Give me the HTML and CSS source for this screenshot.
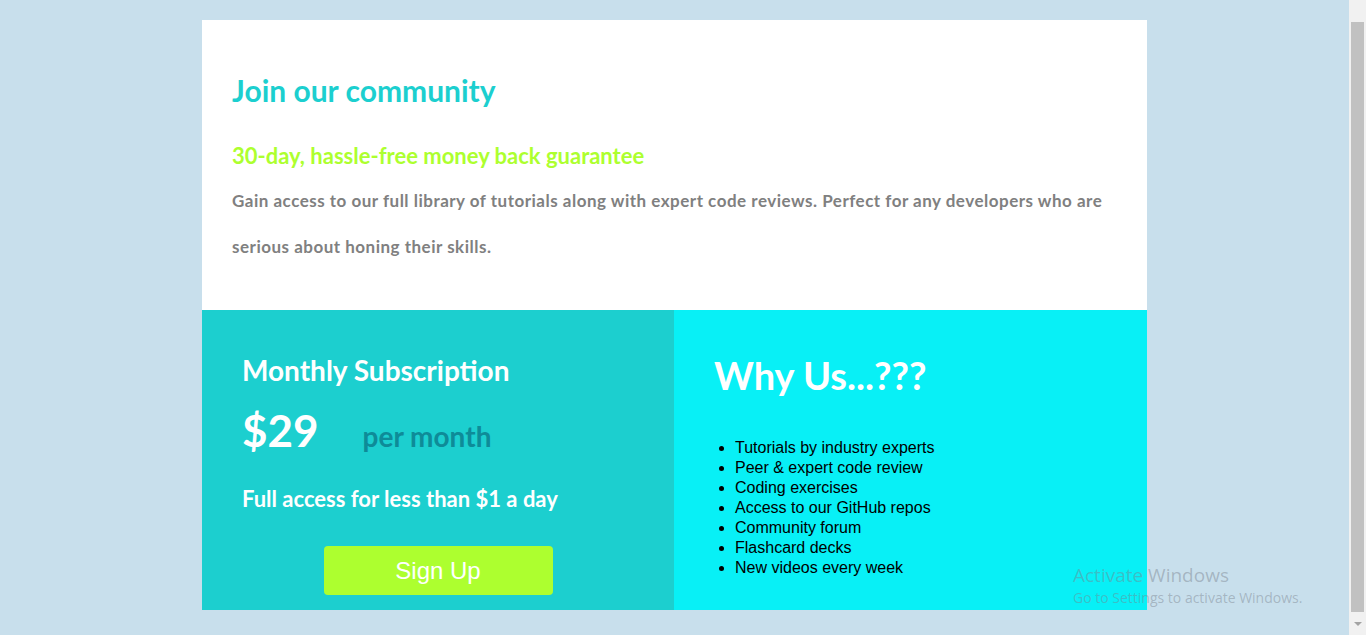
FILE: index.html
```html
<!DOCTYPE html>
<html lang="en">
<head>
<meta charset="utf-8">
<title>Join our community</title>
<link rel="stylesheet" href="styles.css">
</head>
<body>
<div class="viewport">
  <main class="card">
    <section class="intro">
      <h1 class="intro-title">Join our community</h1>
      <h2 class="intro-sub">30-day, hassle-free money back guarantee</h2>
      <p class="intro-text">Gain access to our full library of tutorials along with expert code reviews. Perfect for any developers who are serious about honing their skills.</p>
    </section>
    <section class="plans">
      <div class="plan plan-monthly">
        <h3 class="plan-title">Monthly Subscription</h3>
        <div class="price-row">
          <span class="price">$29</span>
          <span class="per">per month</span>
        </div>
        <p class="plan-note">Full access for less than $1 a day</p>
        <button class="signup" type="button">Sign Up</button>
      </div>
      <div class="plan plan-why">
        <h2 class="why-title">Why Us...???</h2>
        <ul class="why-list">
          <li>Tutorials by industry experts</li>
          <li>Peer &amp; expert code review</li>
          <li>Coding exercises</li>
          <li>Access to our GitHub repos</li>
          <li>Community forum</li>
          <li>Flashcard decks</li>
          <li>New videos every week</li>
        </ul>
      </div>
    </section>
  </main>
</div>
<div class="scrollbar">
  <div class="scroll-thumb"></div>
  <div class="scroll-arrow"></div>
</div>
<div class="watermark">
  <div class="wm-title">Activate Windows</div>
  <div class="wm-sub">Go to Settings to activate Windows.</div>
</div>
</body>
</html>
```
FILE: styles.css
```css
html, body {
  margin: 0;
  padding: 0;
  height: 635px;
  overflow: hidden;
}
body {
  display: flex;
  background: #c8dfec;
  font-family: Lato, "Open Sans", sans-serif;
}
.viewport {
  flex: 1;
  display: flex;
  justify-content: center;
  padding-top: 20px;
}
.card {
  width: 945px;
  display: flex;
  flex-direction: column;
}
.intro {
  background: #ffffff;
  height: 290px;
  box-sizing: border-box;
  padding: 50px 30px 0 30px;
}
.intro-title {
  margin: 0;
  font-size: 30px;
  line-height: 40px;
  font-weight: 700;
  color: #1ccfcf;
}
.intro-sub {
  margin: 31px 0 0 0;
  font-size: 22px;
  line-height: 30px;
  font-weight: 700;
  color: #adff2f;
}
.intro-text {
  margin: 7px 0 0 0;
  font-size: 17px;
  letter-spacing: 0.5px;
  line-height: 46px;
  font-weight: 700;
  color: #808080;
}
.plans {
  display: grid;
  grid-template-columns: 472px 473px;
  height: 300px;
}
.plan {
  box-sizing: border-box;
  color: #ffffff;
}
.plan-monthly {
  background: #1ccfcf;
  padding: 42px 41px 0 40px;
  display: flex;
  flex-direction: column;
}
.plan-title {
  margin: 0;
  font-size: 28px;
  line-height: 36px;
  font-weight: 700;
}
.price-row {
  margin-top: 12px;
  height: 60px;
  display: flex;
  align-items: baseline;
  line-height: 60px;
}
.price {
  font-size: 44px;
  line-height: 60px;
  font-weight: 700;
}
.per {
  margin-left: 44px;
  font-size: 28px;
  line-height: 60px;
  font-weight: 700;
  color: #0e8b98;
}
.plan-note {
  margin: 24px 0 0 0;
  font-size: 22px;
  line-height: 30px;
  font-weight: 700;
}
.signup {
  align-self: center;
  margin: 32px 0 0 1px;
  width: 229px;
  height: 49px;
  border: none;
  border-radius: 4px;
  background: #adff2f;
  color: #ffffff;
  font-family: "Liberation Sans", Arial, sans-serif;
  font-size: 24px;
  padding: 0;
}
.plan-why {
  background: #08f0f6;
  padding: 43px 41px 0 40px;
}
.why-title {
  margin: 0;
  font-size: 38px;
  line-height: 44px;
  font-weight: 700;
}
.why-list {
  margin: 41px 0 0 0;
  padding-left: 21px;
  font-family: "Liberation Sans", Arial, sans-serif;
  font-size: 16px;
  line-height: 20px;
  color: #000000;
}
.scrollbar {
  width: 17px;
  height: 635px;
  background: #f1f1f1;
  display: flex;
  flex-direction: column;
  align-items: center;
}
.scroll-thumb {
  margin-top: 22px;
  width: 13px;
  height: 590px;
  background: #c1c1c1;
}
.scroll-arrow {
  margin-top: 10px;
  width: 0;
  height: 0;
  border-left: 4px solid transparent;
  border-right: 4px solid transparent;
  border-top: 4px solid #a3a3a3;
}
.watermark {
  position: absolute;
  left: 1073px;
  top: 562px;
  color: rgba(120, 130, 140, 0.45);
  font-family: "Open Sans", sans-serif;
}
.wm-title {
  font-size: 19px;
  line-height: 26px;
}
.wm-sub {
  font-size: 14px;
  line-height: 20px;
}
```
